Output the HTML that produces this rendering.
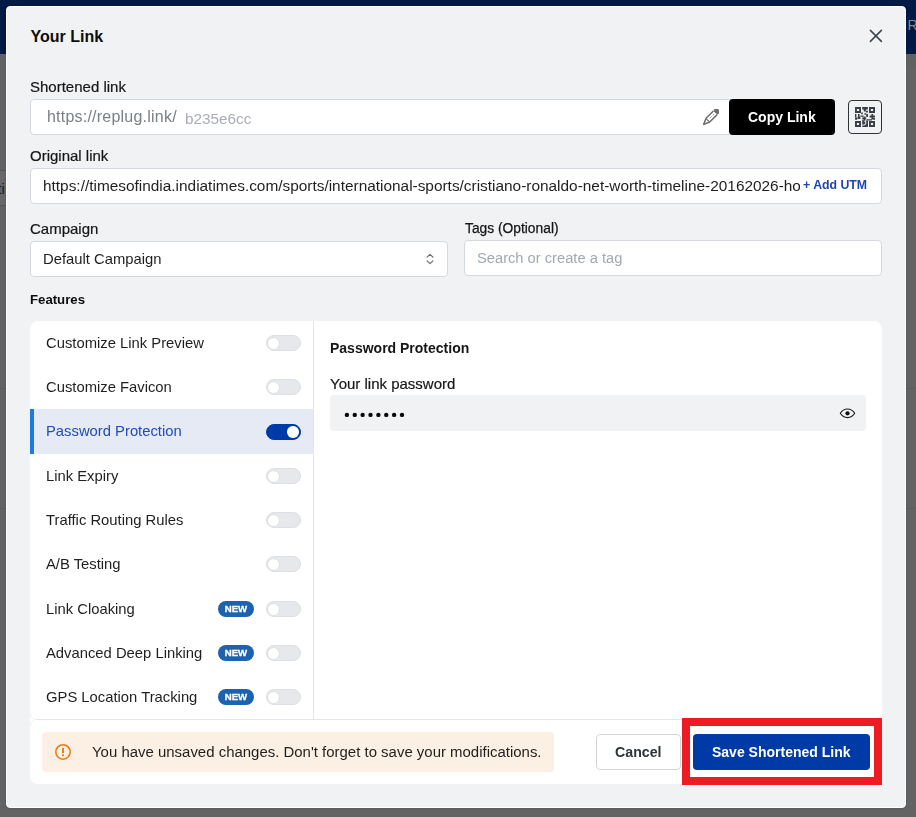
<!DOCTYPE html>
<html><head><meta charset="utf-8">
<style>
*{box-sizing:border-box;margin:0;padding:0}
html,body{width:916px;height:817px;overflow:hidden}
body{position:relative;background:#636363;font-family:"Liberation Sans",sans-serif;color:#1a1a1a}
.a{position:absolute}
.t{position:absolute;line-height:1;white-space:nowrap;will-change:transform}
#nav{left:0;top:0;width:916px;height:54px;background:#001a45}
#modal{left:6px;top:6px;width:900px;height:802px;background:#f1f2f4;border:1px solid #fff;border-radius:4px;box-shadow:0 0 1.5px rgba(0,0,0,0.35)}
.inp{position:absolute;background:#fff;border:1px solid #d4d8df;border-radius:4px}
.tog{position:absolute;width:35px;height:16px;border-radius:8px;background:#e6e8eb;border:1px solid #dcdfe3}
.tog::after{content:"";position:absolute;left:1.4px;top:1.5px;width:11px;height:11px;border-radius:50%;background:#fff;box-shadow:0 0 0 0.6px #d6d9de}
.tog.on{background:#003aa9;border-color:#003aa9}
.tog.on::after{left:20.2px;top:1.2px;width:11.5px;height:11.5px;box-shadow:none}
.new{position:absolute;left:218px;width:36px;height:16px;border-radius:8px;background:#1d62ae;color:#fff;font-weight:700;font-size:9.6px;line-height:16px;text-align:center;will-change:transform;-webkit-text-stroke:0.3px #fff}
.row{position:absolute;left:46px;font-size:14.8px;line-height:1;white-space:nowrap;color:#1f1f1f;will-change:transform}
</style></head>
<body>
<div id="nav" class="a"></div>
<div class="t" style="left:907.6px;top:18px;font-size:14px;color:#8d8882;will-change:auto">R</div>
<div class="a" style="left:0;top:170px;width:6px;height:1px;background:#555"></div>
<div class="a" style="left:0;top:171px;width:6px;height:34px;background:#676767"></div>
<div class="a" style="left:0;top:205px;width:6px;height:1px;background:#555"></div>
<div class="t" style="left:-2.5px;top:181.5px;font-size:14px;color:#0d1630;will-change:auto">ti</div>
<div class="a" style="left:0;top:388px;width:6px;height:1px;background:#5a5a5a"></div>
<div class="a" style="left:0;top:508px;width:6px;height:1px;background:#5a5a5a"></div>
<div class="a" style="left:906px;top:54px;width:10px;height:13px;background:#5f6163"></div><div class="a" style="left:906px;top:388px;width:10px;height:1px;background:#5a5a5a"></div><div class="a" style="left:906px;top:508px;width:10px;height:1px;background:#5a5a5a"></div>
<div id="modal" class="a"></div>

<!-- title -->
<div class="t" style="left:30.5px;top:29px;font-size:16px;font-weight:700;color:#0d0d0d;will-change:auto">Your Link</div>
<!-- close X -->
<svg class="a" style="left:868px;top:28px" width="16" height="16" viewBox="0 0 16 16"><path d="M2.4 2.4L13.4 13.4M13.4 2.4L2.4 13.4" stroke="#3b434e" stroke-width="1.5" stroke-linecap="round"/></svg>

<!-- shortened link -->
<div class="t" style="left:30px;top:79px;font-size:15px;color:#161616;-webkit-text-stroke:0.2px #161616">Shortened link</div>
<div class="inp" style="left:30px;top:99px;width:710px;height:36px"></div>
<div class="t" style="left:46.7px;top:108.8px;font-size:16px;letter-spacing:0.22px;color:#78808a">https://replug.link/</div>
<div class="t" style="left:185px;top:111px;font-size:15.3px;color:#a9adb5">b235e6cc</div>
<svg class="a" style="left:703px;top:109px" width="16" height="16" viewBox="0 0 16 16"><g transform="rotate(45 8 8)"><rect x="4.9" y="-2.6" width="6.2" height="4.6" rx="1.6" fill="#6e6e6e"/><path d="M5.4 2V12.4L8 18.4L10.6 12.4V2" fill="none" stroke="#6e6e6e" stroke-width="1.5" stroke-linejoin="round"/><path d="M5.6 12.6H10.4" stroke="#6e6e6e" stroke-width="1.2"/><path d="M7 16.2L8 18.6L9 16.2z" fill="#6e6e6e"/><path d="M8 4.2V10.4" stroke="#6e6e6e" stroke-width="0.9" stroke-dasharray="1 1"/></g></svg>
<div class="a" style="left:729px;top:99px;width:106px;height:36px;background:#000;border-radius:4px"></div>
<div class="t" style="left:748px;top:110px;font-size:14px;font-weight:700;color:#fff">Copy Link</div>
<div class="a" style="left:848px;top:100px;width:34px;height:34px;border:1.3px solid #2f3338;border-radius:4px"></div>
<svg class="a" style="left:855px;top:107px" width="20" height="20" viewBox="0 0 20 20" fill="#3a3f46">
<path d="M0 0h6v6H0zM1.9 1.9v2.2h2.2V1.9zM14 0h6v6h-6zM15.9 1.9v2.2h2.2V1.9zM0 14h6v6H0zM1.9 15.9v2.2h2.2v-2.2zM14 14h6v6h-6zM15.9 15.9v2.2h2.2v-2.2z" fill-rule="evenodd"/>
<path d="M7.2 0h5.7v2.4H7.2zM8.8 2.4h2.1v2.2H8.8zM11 3.8h1.9v1.8H11zM6.2 5.6h1.6v1.6H6.2zM9.4 6.2h1.8v1.6H9.4z"/>
<path d="M0 7h1.4v3.2H0zM3 7h1.6v3H3zM0 10.6h2.2v2.2H0zM2.6 9.8h2.8v2.2H2.6zM5.4 8.4h3.2v1.4H5.4zM11.2 7h1.8v3h-1.8zM14.6 8.6h5.4v1.8h-5.4zM16.4 7h1.8v5.6h-1.8zM18.2 11h1.8v1.8h-1.8zM7.2 10.6h4v1.6h-4zM8.6 9.4h1.8v4.4H8.6zM11.6 12.2h5.3v1.4h-5.3z"/>
<path d="M7.2 12.8h1.6v5h-1.6zM8.8 14.6h1.4v2.4H8.8zM11.2 13.6h1.8v5h-1.8zM9.6 17.6h1.6v1.2H9.6zM7.2 18.4h5.7v1.6H7.2z"/>
</svg>

<!-- original link -->
<div class="t" style="left:30px;top:148px;font-size:15px;color:#161616;-webkit-text-stroke:0.2px #161616">Original link</div>
<div class="inp" style="left:30px;top:168px;width:852px;height:36px"></div>
<div class="a" style="left:43px;top:176px;width:757px;height:22px;overflow:hidden"><div class="t" style="left:0;top:2px;font-size:15.4px;color:#1f1f1f">https://timesofindia.indiatimes.com/sports/international-sports/cristiano-ronaldo-net-worth-timeline-20162026-houses</div></div>
<div class="t" style="left:803px;top:178.8px;font-size:12.3px;font-weight:700;color:#1c46b4">+ Add UTM</div>

<!-- campaign / tags -->
<div class="t" style="left:30px;top:221px;font-size:15px;color:#161616;-webkit-text-stroke:0.2px #161616">Campaign</div>
<div class="inp" style="left:30px;top:241px;width:418px;height:36px"></div>
<div class="t" style="left:43px;top:252px;font-size:14.8px;color:#1f1f1f">Default Campaign</div>
<svg class="a" style="left:424px;top:251px" width="12" height="16" viewBox="0 0 12 16"><path d="M3.1 6.1L6 3.3L8.9 6.1M3.1 9.9L6 12.7L8.9 9.9" fill="none" stroke="#636a74" stroke-width="1.15" stroke-linecap="round" stroke-linejoin="round"/></svg>
<div class="t" style="left:464.5px;top:222px;font-size:13.8px;color:#161616;-webkit-text-stroke:0.25px #161616">Tags (Optional)</div>
<div class="inp" style="left:464px;top:240px;width:418px;height:36px"></div>
<div class="t" style="left:477px;top:251px;font-size:14.7px;color:#a3a8b1">Search or create a tag</div>

<!-- features -->
<div class="t" style="left:30px;top:293px;font-size:13.2px;font-weight:700;color:#0d0d0d">Features</div>
<div class="a" style="left:30px;top:321px;width:852px;height:398px;background:#fff;border-radius:8px 8px 8px 0"></div>
<div class="a" style="left:313px;top:321px;width:1px;height:398px;background:#e2e5e9"></div>
<div class="a" style="left:30px;top:409px;width:283px;height:44.5px;background:#e5eaf5"></div>
<div class="a" style="left:30px;top:409px;width:4px;height:44.5px;background:#1d7ae2"></div>

<div class="row" style="top:336.20px">Customize Link Preview</div>
<div class="row" style="top:380.45px">Customize Favicon</div>
<div class="row" style="top:424.1px;color:#1f4db5">Password Protection</div>
<div class="row" style="top:468.95px">Link Expiry</div>
<div class="row" style="top:513.20px">Traffic Routing Rules</div>
<div class="row" style="top:557.45px">A/B Testing</div>
<div class="row" style="top:601.70px">Link Cloaking</div>
<div class="row" style="top:645.95px">Advanced Deep Linking</div>
<div class="row" style="top:690.20px">GPS Location Tracking</div>

<div class="tog" style="left:266px;top:335px"></div>
<div class="tog" style="left:266px;top:379px"></div>
<div class="tog on" style="left:266px;top:424px"></div>
<div class="tog" style="left:266px;top:468px"></div>
<div class="tog" style="left:266px;top:512px"></div>
<div class="tog" style="left:266px;top:556px"></div>
<div class="tog" style="left:266px;top:601px"></div>
<div class="tog" style="left:266px;top:645px"></div>
<div class="tog" style="left:266px;top:689px"></div>
<div class="new" style="top:601px">NEW</div>
<div class="new" style="top:645px">NEW</div>
<div class="new" style="top:689px">NEW</div>

<!-- right panel -->
<div class="t" style="left:330px;top:341px;font-size:14px;font-weight:700;color:#161616">Password Protection</div>
<div class="t" style="left:330px;top:376px;font-size:15px;color:#161616;-webkit-text-stroke:0.2px #161616">Your link password</div>
<div class="a" style="left:330px;top:395px;width:536px;height:36px;background:#f1f2f4;border-radius:4px"></div>
<svg class="a" style="left:340px;top:408px" width="70" height="14" viewBox="0 0 70 14" fill="#0a0a0a"><circle cx="6.90" cy="6.9" r="2.2"/><circle cx="14.77" cy="6.9" r="2.2"/><circle cx="22.64" cy="6.9" r="2.2"/><circle cx="30.51" cy="6.9" r="2.2"/><circle cx="38.38" cy="6.9" r="2.2"/><circle cx="46.25" cy="6.9" r="2.2"/><circle cx="54.12" cy="6.9" r="2.2"/><circle cx="61.99" cy="6.9" r="2.2"/></svg>
<svg class="a" style="left:839px;top:406px" width="17" height="15" viewBox="0 0 17 15"><path d="M1.3 7.3C3.2 4.3 5.6 3.0 8.5 3.0S13.8 4.3 15.7 7.3C13.8 10.3 11.4 11.6 8.5 11.6S3.2 10.3 1.3 7.3z" fill="none" stroke="#1e1e1e" stroke-width="1.15" stroke-linejoin="round"/><circle cx="8.5" cy="7.3" r="2.1" fill="#111"/></svg>

<!-- footer -->
<div class="a" style="left:30px;top:719px;width:852px;height:65px;background:#fff;border-radius:0 0 8px 8px"></div><div class="a" style="left:36px;top:719px;width:846px;height:1px;background:#e2e5e9"></div>
<svg class="a" style="left:30px;top:711px" width="8" height="17" viewBox="0 0 8 17"><path d="M0.5 1.5A6 6 0 0 0 6.5 8.5M0.5 15.5A6 6 0 0 1 6.5 8.5" fill="none" stroke="#eceef1" stroke-width="0.8"/></svg>
<div class="a" style="left:42px;top:732px;width:512px;height:40px;background:#fcf0e4;border-radius:4px"></div>
<svg class="a" style="left:54px;top:743px" width="18" height="18" viewBox="0 0 18 18"><circle cx="9" cy="8.95" r="7.2" fill="none" stroke="#e47a12" stroke-width="1.5"/><rect x="8.05" y="5" width="1.9" height="5" fill="#e47a12"/><rect x="8.05" y="11.3" width="1.9" height="1.8" fill="#e47a12"/></svg>
<div class="t" style="left:92px;top:745.2px;font-size:14.96px;color:#1f1f1f">You have unsaved changes. Don't forget to save your modifications.</div>
<div class="a" style="left:596px;top:734px;width:85px;height:36px;background:#fff;border:1px solid #d3d6db;border-radius:4px"></div>
<div class="t" style="left:615.2px;top:745.2px;font-size:14.2px;font-weight:700;color:#2d3339">Cancel</div>
<div class="a" style="left:693px;top:734px;width:177px;height:36px;background:#003aa7;border-radius:4px"></div>
<div class="t" style="left:711.6px;top:745px;font-size:14px;font-weight:700;color:#fff">Save Shortened Link</div>
<div class="a" style="left:682px;top:718px;width:200px;height:67px;border:8px solid #ed1c24"></div>
</body></html>
